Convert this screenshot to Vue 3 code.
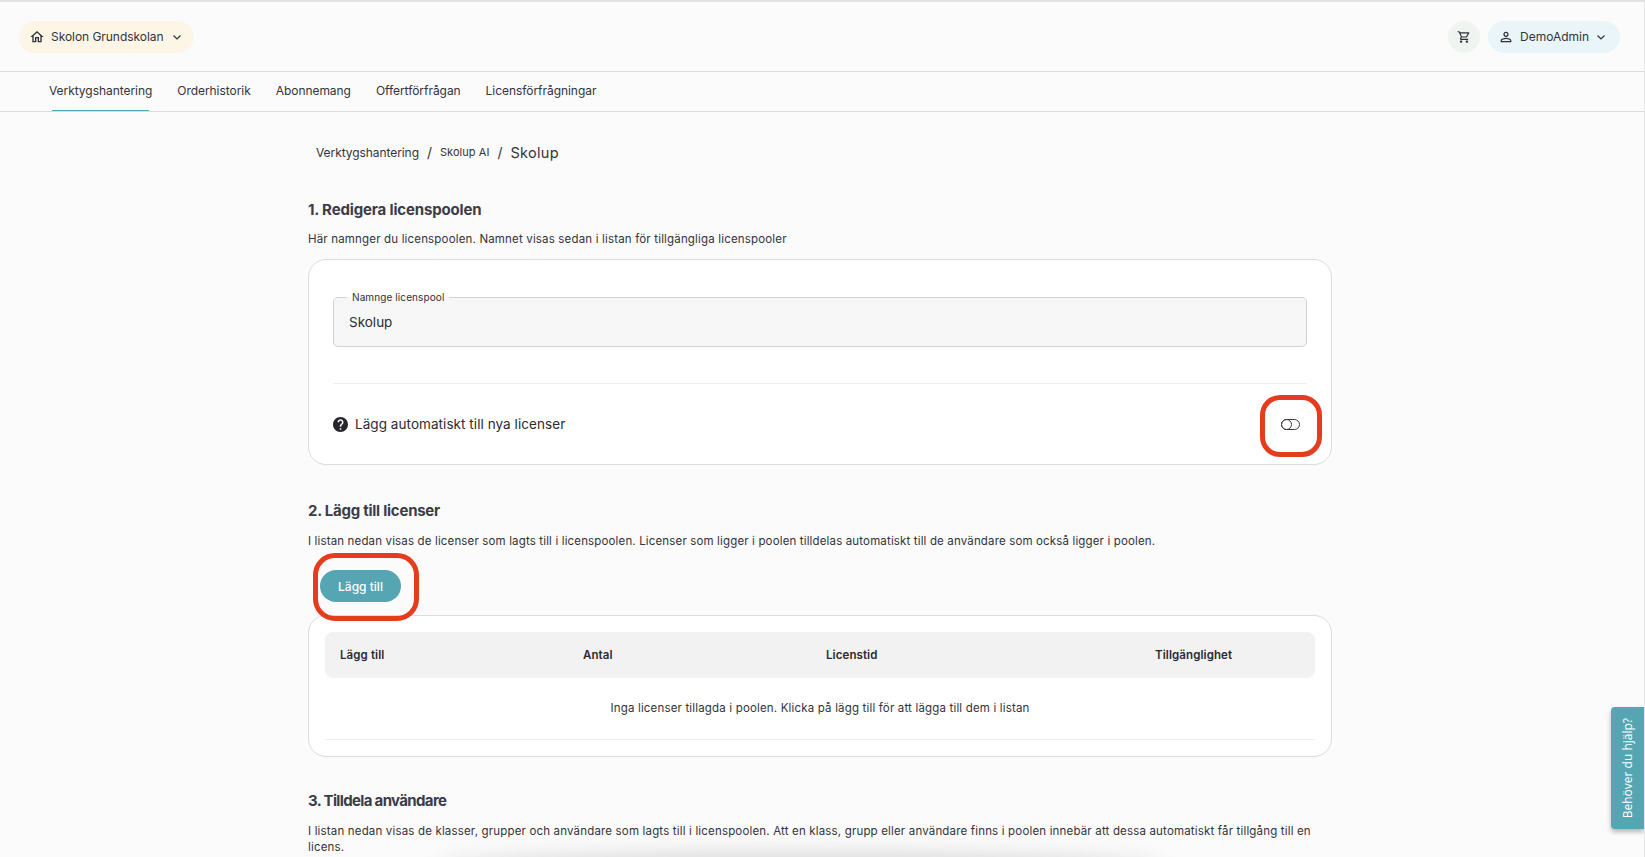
<script setup>
const tabs = ['Verktygshantering', 'Orderhistorik', 'Abonnemang', 'Offertförfrågan', 'Licensförfrågningar']
const columns = ['Lägg till', 'Antal', 'Licenstid', 'Tillgänglighet']
</script>

<template>
  <div class="page">
    <header class="topbar">
      <button class="pill school">
        <svg class="ico" viewBox="0 0 24 24"><path d="M12 5.69l5 4.5V18h-2v-6H9v6H7v-7.81l5-4.5M12 3L2 12h3v8h6v-6h2v6h6v-8h3L12 3z"/></svg>
        <span>Skolon Grundskolan</span>
        <svg class="chev" viewBox="0 0 12 12"><path d="M2.5 4.5L6 8l3.5-3.5"/></svg>
      </button>
      <div class="top-right">
        <button class="cart">
          <svg class="ico cart-ico" viewBox="0 0 24 24"><path d="M15.55 13c.75 0 1.41-.41 1.75-1.03l3.58-6.49A.996.996 0 0 0 20.01 4H5.21l-.94-2H1v2h2l3.6 7.59-1.35 2.44C4.52 15.37 5.48 17 7 17h12v-2H7l1.1-2h7.45zM6.16 6h12.15l-2.76 5H8.53L6.16 6zM7 18c-1.1 0-1.99.9-1.99 2S5.9 22 7 22s2-.9 2-2-.9-2-2-2zm10 0c-1.1 0-1.99.9-1.99 2s.89 2 1.99 2 2-.9 2-2-.9-2-2-2z"/></svg>
        </button>
        <button class="pill user">
          <svg class="ico" viewBox="0 0 24 24"><path d="M12 5.9a2.1 2.1 0 1 1 0 4.2 2.1 2.1 0 0 1 0-4.2m0 9c2.97 0 6.1 1.46 6.1 2.1v1.1H5.9V17c0-.64 3.13-2.1 6.1-2.1M12 4C9.79 4 8 5.79 8 8s1.79 4 4 4 4-1.79 4-4-1.79-4-4-4zm0 9c-2.67 0-8 1.34-8 4v3h16v-3c0-2.66-5.33-4-8-4z"/></svg>
          <span>DemoAdmin</span>
          <svg class="chev" viewBox="0 0 12 12"><path d="M2.5 4.5L6 8l3.5-3.5"/></svg>
        </button>
      </div>
    </header>

    <nav class="tabs">
      <a v-for="(tab, i) in tabs" :key="tab" class="tab" :class="{ active: i === 0 }">{{ tab }}</a>
    </nav>

    <main class="content">
      <div class="crumbs">
        <span class="root">Verktygshantering</span>
        <span class="sep">/</span>
        <span class="small">Skolup AI</span>
        <span class="sep">/</span>
        <span class="current">Skolup</span>
      </div>

      <h2 class="first">1. Redigera licenspoolen</h2>
      <p class="after-first">Här namnger du licenspoolen. Namnet visas sedan i listan för tillgängliga licenspooler</p>
      <section class="card card-one">
        <div class="field">
          <span class="legend">Namnge licenspool</span>
          <span class="value">Skolup</span>
        </div>
        <div class="auto">
          <div class="auto-label">
            <svg class="help" viewBox="2 2 20 20"><path d="M12 2C6.48 2 2 6.48 2 12s4.48 10 10 10 10-4.48 10-10S17.52 2 12 2zm1 17h-2v-2h2v2zm2.07-7.75l-.9.92C13.45 12.9 13 13.5 13 15h-2v-.5c0-1.1.45-2.1 1.17-2.83l1.24-1.26c.37-.36.59-.86.59-1.41 0-1.1-.9-2-2-2s-2 .9-2 2H8c0-2.21 1.79-4 4-4s4 1.79 4 4c0 .88-.36 1.68-.93 2.25z"/></svg>
            <span>Lägg automatiskt till nya licenser</span>
          </div>
          <div class="toggle"><i></i></div>
          <div class="mark mark-toggle"></div>
        </div>
      </section>

      <h2 class="second">2. Lägg till licenser</h2>
      <p class="after-second">I listan nedan visas de licenser som lagts till i licenspoolen. Licenser som ligger i poolen tilldelas automatiskt till de användare som också ligger i poolen.</p>
      <div class="add-wrap">
        <button class="add">Lägg till</button>
        <div class="mark mark-add"></div>
      </div>
      <section class="card card-two">
        <div class="thead">
          <span v-for="c in columns" :key="c">{{ c }}</span>
        </div>
        <div class="empty">Inga licenser tillagda i poolen. Klicka på lägg till för att lägga till dem i listan</div>
      </section>

      <h2 class="third">3. Tilldela användare</h2>
      <p class="wrap">I listan nedan visas de klasser, grupper och användare som lagts till i licenspoolen. Att en klass, grupp eller användare finns i poolen innebär att dessa automatiskt får tillgång till en licens.</p>
    </main>

    <button class="helptab"><span>Behöver du hjälp?</span></button>
    <div class="fold-shadow"></div>
  </div>
</template>

<style>
html, body { margin: 0; height: 857px; overflow: hidden; background: #fbfbfb; }
</style>

<style scoped>
.page {
  position: relative;
  height: 857px;
  overflow: hidden;
  box-sizing: border-box;
  border-top: 2px solid #e2e2e2;
  border-right: 1px solid #e6e6e6;
  background: #fbfbfb;
  color: #2b2b33;
  font-family: Inter, "Open Sans", sans-serif;
  font-size: 12px;
}
button { font: inherit; color: inherit; border: 0; cursor: pointer; }
.topbar {
  height: 70px;
  box-sizing: border-box;
  border-bottom: 1px solid #dcdcdc;
  display: flex;
  align-items: flex-start;
  justify-content: space-between;
  padding: 19px 24px 0 19px;
}
.top-right { display: flex; gap: 8px; }
.pill {
  height: 32px;
  border-radius: 16px;
  display: flex;
  align-items: center;
  padding: 0;
  font-size: 12px;
  color: #33333b;
}
.pill span { margin-top: -2px; }
.school { width: 175px; background: #fdf6e6; padding-left: 10px; gap: 6px; letter-spacing: -0.05px; }
.user { width: 132px; background: #e9f5f8; padding-left: 10px; gap: 6px; }
.ico { width: 16px; height: 16px; fill: #2f2f37; flex: none; }
.cart-ico { width: 14px; height: 14px; }
.chev { width: 12px; height: 12px; fill: none; stroke: #33333b; stroke-width: 1.2; flex: none; }
.school .chev { margin-left: 2px; }
.user .chev { margin-left: 0; }
.cart {
  width: 32px;
  height: 32px;
  border-radius: 50%;
  background: #f0f4f1;
  padding: 0;
  display: flex;
  align-items: center;
  justify-content: center;
}
.tabs {
  height: 40px;
  box-sizing: border-box;
  border-bottom: 1px solid #dcdcdc;
  display: flex;
  padding-left: 49px;
  gap: 25px;
  font-size: 12px;
  letter-spacing: -0.05px;
}
.tab {
  position: relative;
  height: 39px;
  line-height: 37px;
  color: #33333b;
  white-space: nowrap;
}
.tab.active::after {
  content: "";
  position: absolute;
  left: 3px;
  right: 3px;
  bottom: 0;
  height: 1px;
  background: #4aa9b5;
}
.content {
  width: 1024px;
  margin-left: 308px;
  padding-top: 30px;
}
.crumbs {
  height: 20px;
  display: flex;
  align-items: center;
  padding-left: 8px;
  font-size: 12px;
  color: #33333b;
}
.root { letter-spacing: -0.07px; }
.sep { font-size: 14px; margin: 0 8px; }
.small { font-size: 11px; letter-spacing: 0.05px; }
.current { font-size: 14.5px; letter-spacing: 0.3px; }
h2 {
  margin: 0;
  font-size: 15px;
  line-height: 24px;
  font-weight: 700;
  color: #3b3b49;
}
.first { margin-top: 36px; letter-spacing: -0.15px; }
.second { margin-top: 34px; letter-spacing: -0.25px; }
.third { margin-top: 32px; letter-spacing: -0.65px; }
p {
  margin: 8px 0 0;
  font-size: 11.5px;
  line-height: 18px;
  letter-spacing: 0.17px;
  color: #33333b;
}
p.after-second { margin-top: 9px; letter-spacing: 0.15px; }
p.wrap { margin-top: 10px; line-height: 16px; }
.card {
  box-sizing: border-box;
  background: #fff;
  border: 1px solid #dcdcdc;
  border-radius: 18px;
}
.card-one {
  margin-top: 11px;
  height: 206px;
  padding: 37px 24px 0;
}
.field {
  position: relative;
  height: 50px;
  box-sizing: border-box;
  border: 1px solid #d2d2d2;
  border-radius: 5px;
  background: #f7f7f7;
  display: flex;
  align-items: center;
  padding-left: 15px;
  padding-bottom: 1px;
}
.legend {
  position: absolute;
  left: 13px;
  top: -7px;
  padding: 0 5px;
  font-size: 10px;
  line-height: 12px;
  letter-spacing: 0.1px;
  background: linear-gradient(#fff 50%, #f7f7f7 50%);
  color: #33333b;
}
.value { font-size: 13.5px; color: #2b2b33; }
.auto {
  position: relative;
  margin-top: 36px;
  border-top: 1px solid #eeeeee;
  height: 80px;
  display: flex;
  align-items: center;
  justify-content: space-between;
}
.auto-label {
  display: flex;
  align-items: center;
  gap: 7px;
  font-size: 13.5px;
  letter-spacing: 0.06px;
  color: #2b2b33;
}
.help { width: 15px; height: 15px; fill: #26262c; }
.toggle {
  width: 19px;
  height: 11px;
  box-sizing: border-box;
  border: 1px solid #3a3a42;
  border-radius: 6px;
  margin-right: 7px;
  position: relative;
}
.toggle i {
  position: absolute;
  left: -1px;
  top: -1px;
  width: 11px;
  height: 11px;
  box-sizing: border-box;
  border: 1px solid #3a3a42;
  border-radius: 50%;
}
.mark {
  position: absolute;
  box-sizing: border-box;
  border: 5px solid #e63c1e;
  z-index: 3;
  pointer-events: none;
}
.mark-toggle {
  width: 62px;
  height: 62px;
  border-radius: 20px;
  right: -15px;
  top: 11px;
}
.add-wrap {
  position: relative;
  margin-top: 20px;
  height: 45px;
  padding-left: 12px;
}
.add {
  width: 81px;
  height: 32px;
  border-radius: 16px;
  background: #55a5b3;
  color: #fff;
  font-size: 12px;
  font-weight: 500;
  padding: 0;
}
.mark-add {
  left: 5px;
  top: -17px;
  width: 106px;
  height: 68px;
  border-radius: 22px;
}
.card-two {
  height: 142px;
  padding: 16px 16px 0;
}
.thead {
  height: 46px;
  border-radius: 8px;
  background: #f2f2f2;
  display: grid;
  grid-template-columns: 243px 243px 329px 1fr;
  align-items: center;
  padding-left: 15px;
  padding-bottom: 1px;
  box-sizing: border-box;
  font-size: 11.5px;
  font-weight: 600;
  letter-spacing: 0.1px;
  color: #2b2b33;
}
.empty {
  height: 62px;
  line-height: 61px;
  box-sizing: border-box;
  border-bottom: 1px solid #eeeeee;
  text-align: center;
  font-size: 11.5px;
  letter-spacing: 0.17px;
  color: #33333b;
}
.helptab {
  position: absolute;
  right: 0;
  top: 705px;
  width: 33px;
  height: 122px;
  padding: 0;
  background: #55a5b3;
  border-radius: 4px 0 0 4px;
  box-shadow: 0 3px 5px rgba(0, 0, 0, 0.28);
  color: #fff;
  font-family: "Open Sans", sans-serif;
  font-size: 12px;
  font-weight: 500;
  display: flex;
  align-items: center;
  justify-content: center;
}
.helptab span {
  writing-mode: vertical-rl;
  transform: rotate(180deg);
  white-space: nowrap;
}
.fold-shadow {
  position: absolute;
  left: 440px;
  width: 720px;
  height: 20px;
  bottom: -22px;
  border-radius: 50%;
  box-shadow: 0 0 22px 6px rgba(0, 0, 0, 0.14);
}
</style>
